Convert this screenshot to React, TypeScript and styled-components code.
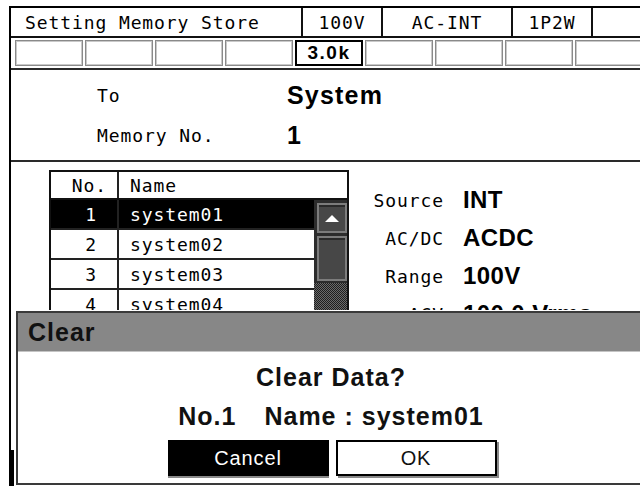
import React from 'react';
import styled, { createGlobalStyle } from 'styled-components';

const mono = `"DejaVu Sans Mono", "Liberation Mono", monospace`;
const sans = `"Liberation Sans", Arial, sans-serif`;

const GlobalStyle = createGlobalStyle`
  html, body {
    margin: 0;
    padding: 0;
    background: #fff;
  }
  body {
    width: 640px;
    height: 486px;
    overflow: hidden;
  }
`;

const Screen = styled.div`
  position: relative;
  width: 640px;
  height: 486px;
  overflow: hidden;
  box-sizing: border-box;
  padding: 6px 0 0 9px;
  background: #fff;
  color: #000;
  font-family: ${mono};
  font-size: 18px;
  letter-spacing: 0.9px;
`;

const Frame = styled.div`
  position: relative;
  height: 100%;
  box-sizing: border-box;
  border-left: 2px solid #000;
  border-top: 2px solid #000;
  display: flex;
  flex-direction: column;

  /* heavier bezel mark at the lower left */
  &::after {
    content: '';
    position: absolute;
    left: -2px;
    bottom: 0;
    width: 5px;
    height: 36px;
    background: #000;
  }
`;

const StatusRow = styled.div`
  display: grid;
  grid-template-columns: 292px 80px 130px 80px 1fr;
  height: 30px;
  box-sizing: border-box;
  border-bottom: 2px solid #111;
`;

const StatusCell = styled.div<{ $left?: boolean }>`
  box-sizing: border-box;
  border-right: 2px solid #111;
  display: flex;
  align-items: center;
  justify-content: ${({ $left }) => ($left ? 'flex-start' : 'center')};
  padding-left: ${({ $left }) => ($left ? '14px' : '0')};
  white-space: nowrap;
  &:last-child {
    border-right: none;
  }
`;

const KeyRow = styled.div`
  display: grid;
  grid-template-columns: repeat(9, 68px);
  column-gap: 2px;
  height: 32px;
  box-sizing: border-box;
  padding: 2px 0 0 4px;
  border-bottom: 2px solid #2a2a2a;
`;

const KeyBox = styled.div<{ $active?: boolean }>`
  height: 26px;
  box-sizing: border-box;
  border: ${({ $active }) => ($active ? '2px solid #000' : '1px solid #8a8a8a')};
  box-shadow: ${({ $active }) => ($active ? 'none' : 'inset 0 0 0 1px #c9c9c9')};
  display: flex;
  align-items: center;
  justify-content: center;
  font-family: ${sans};
  font-weight: bold;
  font-size: 19px;
  letter-spacing: 1.5px;
`;

const TargetPanel = styled.div`
  height: 92px;
  box-sizing: border-box;
  padding: 5px 0 0 86px;
  border-bottom: 2px solid #2a2a2a;
  display: grid;
  grid-template-columns: 190px auto;
  grid-auto-rows: 40px;
  align-items: center;
`;

const Label = styled.div`
  white-space: nowrap;
`;

const BigValue = styled.div`
  font-family: ${sans};
  font-weight: bold;
  font-size: 25px;
  letter-spacing: 1.2px;
`;

const Lower = styled.div`
  flex: 1;
  display: flex;
  padding: 8px 0 0 38px;
  min-height: 0;
`;

const Table = styled.div`
  width: 300px;
  height: 330px;
  box-sizing: border-box;
  border: 2px solid #111;
  border-bottom: none;
  display: flex;
  flex-direction: column;
`;

const HeadRow = styled.div`
  display: flex;
  height: 28px;
  box-sizing: border-box;
  border-bottom: 2px solid #111;
`;

const NoCell = styled.div<{ $pad: number }>`
  width: 68px;
  box-sizing: border-box;
  border-right: 2px solid #222;
  padding-right: ${({ $pad }) => $pad}px;
  display: flex;
  align-items: center;
  justify-content: flex-end;
`;

const NameCell = styled.div`
  flex: 1;
  padding-left: 11px;
  display: flex;
  align-items: center;
  white-space: nowrap;
`;

const TableBody = styled.div`
  flex: 1;
  display: flex;
`;

const Rows = styled.div`
  flex: 1;
  display: flex;
  flex-direction: column;
`;

const Row = styled.div<{ $selected?: boolean }>`
  display: flex;
  height: 30px;
  box-sizing: border-box;
  border-bottom: 2px solid #222;
  background: ${({ $selected }) => ($selected ? '#000' : '#fff')};
  color: ${({ $selected }) => ($selected ? '#fff' : '#000')};
`;

const ScrollBar = styled.div`
  width: 33px;
  background: #2c2c2c;
  display: flex;
  flex-direction: column;
`;

const ScrollPart = styled.div<{ $h: number }>`
  height: ${({ $h }) => $h}px;
  margin: 3px 0 0 3px;
  box-sizing: border-box;
  background: #474747;
  border: 2px solid #7c7c7c;
  box-shadow: inset 0 2px 0 #2a2a2a;
  display: flex;
  align-items: center;
  justify-content: center;
`;

const UpArrow = styled.div`
  width: 0;
  height: 0;
  border-left: 7px solid transparent;
  border-right: 7px solid transparent;
  border-bottom: 7px solid #fff;
`;

const Track = styled.div`
  flex: 1;
  margin-top: 2px;
  background: repeating-conic-gradient(#1e1e1e 0 25%, #6a6a6a 0 50%) 0 0 / 2px 2px;
`;

const Info = styled.div`
  margin-left: 11px;
  padding-top: 11px;
  display: grid;
  grid-template-columns: 84px auto;
  grid-auto-rows: 38px;
  column-gap: 19px;
  align-items: center;
  align-content: start;
`;

const InfoLabel = styled.div`
  text-align: right;
  white-space: nowrap;
`;

const InfoValue = styled.div`
  font-family: ${sans};
  font-weight: bold;
  font-size: 24px;
  letter-spacing: 0.4px;
  white-space: nowrap;
`;

const Dialog = styled.div`
  position: absolute;
  left: 16px;
  top: 311px;
  width: 630px;
  bottom: 1px;
  box-sizing: border-box;
  background: #fff;
  border: 2px solid #3a3a3a;
  box-shadow: 0 0 0 1px #fff;
  display: flex;
  flex-direction: column;
  font-family: ${sans};
`;

const DialogTitle = styled.div`
  height: 39px;
  box-sizing: border-box;
  background: #878787;
  border-bottom: 1px solid #c4c4c4;
  padding-left: 10px;
  display: flex;
  align-items: center;
  font-weight: bold;
  font-size: 25px;
  letter-spacing: 1px;
  color: #111;
`;

const DialogBody = styled.div`
  padding-top: 10px;
  display: flex;
  flex-direction: column;
  align-items: center;
  gap: 9px;
`;

const Message = styled.div`
  height: 30px;
  display: flex;
  align-items: center;
  gap: 28px;
  font-weight: bold;
  font-size: 25px;
  letter-spacing: 1px;
  white-space: pre;
  color: #111;
`;

const Buttons = styled.div`
  display: flex;
  gap: 7px;
  margin-left: 2px;
`;

const DlgButton = styled.div<{ $focus?: boolean }>`
  width: 161px;
  height: 36px;
  box-sizing: border-box;
  display: flex;
  align-items: center;
  justify-content: center;
  font-size: 20px;
  background: ${({ $focus }) => ($focus ? '#000' : '#fff')};
  color: ${({ $focus }) => ($focus ? '#fff' : '#111')};
  border: 2px solid #000;
  box-shadow: ${({ $focus }) => ($focus ? '0 2px 0 #8a8a8a' : '2px 2px 0 #8a8a8a')};
`;

const rows = [
  { no: 1, name: 'system01' },
  { no: 2, name: 'system02' },
  { no: 3, name: 'system03' },
  { no: 4, name: 'system04' },
];

const info = [
  ['Source', 'INT'],
  ['AC/DC', 'ACDC'],
  ['Range', '100V'],
  ['ACV', '100.0 Vrms'],
];

const App: React.FC = () => {
  return (
    <>
      <GlobalStyle />
      <Screen>
        <Frame>
          <StatusRow>
            <StatusCell $left>Setting Memory Store</StatusCell>
            <StatusCell>100V</StatusCell>
            <StatusCell>AC-INT</StatusCell>
            <StatusCell>1P2W</StatusCell>
            <StatusCell />
          </StatusRow>
          <KeyRow>
            {Array.from({ length: 9 }).map((_, i) => (
              <KeyBox key={i} $active={i === 4}>
                {i === 4 ? '3.0k' : ''}
              </KeyBox>
            ))}
          </KeyRow>
          <TargetPanel>
            <Label>To</Label>
            <BigValue>System</BigValue>
            <Label>Memory No.</Label>
            <BigValue>1</BigValue>
          </TargetPanel>
          <Lower>
            <Table>
              <HeadRow>
                <NoCell $pad={10}>No.</NoCell>
                <NameCell>Name</NameCell>
              </HeadRow>
              <TableBody>
                <Rows>
                  {rows.map((r) => (
                    <Row key={r.no} $selected={r.no === 1}>
                      <NoCell $pad={20}>{r.no}</NoCell>
                      <NameCell>{r.name}</NameCell>
                    </Row>
                  ))}
                </Rows>
                <ScrollBar>
                  <ScrollPart $h={30}>
                    <UpArrow />
                  </ScrollPart>
                  <ScrollPart $h={45} />
                  <Track />
                </ScrollBar>
              </TableBody>
            </Table>
            <Info>
              {info.map(([k, v]) => (
                <React.Fragment key={k}>
                  <InfoLabel>{k}</InfoLabel>
                  <InfoValue>{v}</InfoValue>
                </React.Fragment>
              ))}
            </Info>
          </Lower>
        </Frame>
        <Dialog>
          <DialogTitle>Clear</DialogTitle>
          <DialogBody>
            <Message>Clear Data?</Message>
            <Message>
              <span>No.1</span>
              <span>Name : system01</span>
            </Message>
            <Buttons>
              <DlgButton $focus>Cancel</DlgButton>
              <DlgButton>OK</DlgButton>
            </Buttons>
          </DialogBody>
        </Dialog>
      </Screen>
    </>
  );
};

export default App;
